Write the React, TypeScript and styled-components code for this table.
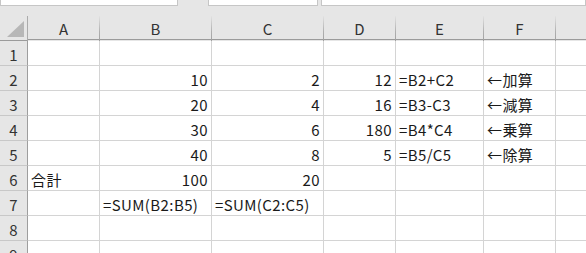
import React from "react";
import styled, { createGlobalStyle } from "styled-components";

const GlobalStyle = createGlobalStyle`
  html, body {
    margin: 0;
    padding: 0;
    background: #ffffff;
    overflow: hidden;
  }
  body {
    font-family: "Noto Sans CJK JP", "Noto Sans", sans-serif;
  }
`;

type Align = "left" | "right";

interface CellData {
  text?: string;
  align?: Align;
}

const COLUMNS = ["A", "B", "C", "D", "E", "F", ""];
const WIDTHS = [72, 112, 112, 72, 88, 72, 60];

const ROWS: CellData[][] = [
  [],
  [{}, { text: "10", align: "right" }, { text: "2", align: "right" }, { text: "12", align: "right" }, { text: "=B2+C2" }, { text: "←加算" }],
  [{}, { text: "20", align: "right" }, { text: "4", align: "right" }, { text: "16", align: "right" }, { text: "=B3-C3" }, { text: "←減算" }],
  [{}, { text: "30", align: "right" }, { text: "6", align: "right" }, { text: "180", align: "right" }, { text: "=B4*C4" }, { text: "←乗算" }],
  [{}, { text: "40", align: "right" }, { text: "8", align: "right" }, { text: "5", align: "right" }, { text: "=B5/C5" }, { text: "←除算" }],
  [{ text: "合計" }, { text: "100", align: "right" }, { text: "20", align: "right" }],
  [{}, { text: "=SUM(B2:B5)" }, { text: "=SUM(C2:C5)" }],
  [],
  [],
];

export default function App(): JSX.Element {
  return (
    <>
      <GlobalStyle />
      <Window>
        <TopBar>
          <Field $width={178} />
          <Field $width={110} $offset={30} />
          <Field $grow $offset={3} />
        </TopBar>
        <Sheet $cols={WIDTHS}>
          <Corner>
            <CornerMark />
          </Corner>
          {COLUMNS.map((c, i) => (
            <ColHead key={"h" + i}>{c}</ColHead>
          ))}
          {ROWS.map((row, r) => (
            <React.Fragment key={"r" + r}>
              <RowHead>{r + 1}</RowHead>
              {COLUMNS.map((_, c) => {
                const cell = row[c] || {};
                return (
                  <Cell key={c} $align={cell.align || "left"}>
                    {cell.text}
                  </Cell>
                );
              })}
            </React.Fragment>
          ))}
        </Sheet>
      </Window>
    </>
  );
}

const Window = styled.div`
  width: 586px;
  height: 253px;
  overflow: hidden;
  background: #e6e6e6;
`;

const TopBar = styled.div`
  display: flex;
  height: 16px;
  background: #e6e6e6;
`;

const Field = styled.div<{ $width?: number; $grow?: boolean; $offset?: number }>`
  box-sizing: border-box;
  height: 6px;
  margin-left: ${(p) => p.$offset || 0}px;
  width: ${(p) => (p.$width ? `${p.$width}px` : "auto")};
  flex: ${(p) => (p.$grow ? "1" : "none")};
  background: #ffffff;
  border: 1px solid #c6c6c6;
  border-top: none;
`;

const Sheet = styled.div<{ $cols: number[] }>`
  display: grid;
  grid-template-columns: 28px ${(p) => p.$cols.map((w) => `${w}px`).join(" ")};
  grid-auto-rows: 25px;
  background: #ffffff;
  font-size: 15px;
  color: #1a1a1a;
`;

const HeadBase = styled.div`
  box-sizing: border-box;
  background: #e6e6e6;
  color: #333333;
  display: flex;
  align-items: center;
  justify-content: center;
  line-height: 1;
`;

const Corner = styled(HeadBase)`
  position: relative;
  border-right: 1px solid #ababab;
  border-bottom: 1px solid #9b9b9b;
`;

const CornerMark = styled.div`
  position: absolute;
  right: 3px;
  bottom: 3px;
  width: 17px;
  height: 16px;
  background: #b7b7b7;
  clip-path: polygon(100% 0, 100% 100%, 0 100%);
`;

const ColHead = styled(HeadBase)`
  border-bottom: 1px solid #9b9b9b;
  border-right: 1px solid transparent;
  border-image: linear-gradient(to bottom, #e6e6e6, #b0b0b0 60%, #9e9e9e) 1;
  border-image-width: 0 1px 0 0;
  box-shadow: inset 0 -1px 0 #9b9b9b;
  padding-top: 1px;
`;

const RowHead = styled(HeadBase)`
  border-right: 1px solid #9e9e9e;
  border-bottom: 1px solid #c8c8c8;
  padding-top: 3px;
`;

const Cell = styled.div<{ $align: Align }>`
  box-sizing: border-box;
  border-right: 1px solid #d4d4d4;
  border-bottom: 1px solid #d4d4d4;
  display: flex;
  align-items: flex-end;
  justify-content: ${(p) => (p.$align === "right" ? "flex-end" : "flex-start")};
  padding: 0 3px 3px 3px;
  white-space: nowrap;
  line-height: 1;
  letter-spacing: 0.4px;
`;
